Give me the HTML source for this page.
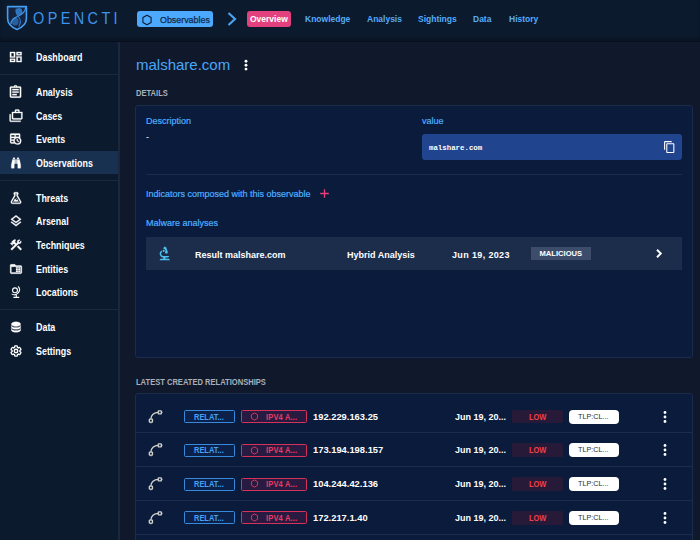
<!DOCTYPE html>
<html lang="en">
<head>
<meta charset="utf-8">
<title>OpenCTI - malshare.com</title>
<style>
*{box-sizing:border-box;margin:0;padding:0}
html,body{width:700px;height:540px;overflow:hidden;background:#0f192b;font-family:"Liberation Sans",sans-serif;color:#fff}
.abs{position:absolute}
.t{position:absolute;white-space:nowrap;line-height:1;transform:translateY(-50%)}
#top{position:absolute;left:0;top:0;width:700px;height:42px;background:#0c1a2e;border-bottom:1.300px solid #070f1c;box-shadow:inset 0 -3px 3px rgba(0,0,0,.22);z-index:2}
#side{position:absolute;left:0;top:41.500px;width:120.300px;height:499px;background:#0c1a2e;border-right:2.300px solid #1b273c}
.nav{position:absolute;left:36px;margin-top:.4px;font-size:10px;font-weight:700;color:#fff;line-height:1;transform:translateY(-50%) scaleX(.89);transform-origin:0 50%;white-space:nowrap}
.ico{position:absolute;left:8.700px;width:14px;height:14px;margin-top:-.8px;transform:translateY(-50%);stroke:#fff;stroke-width:.5px}
.sdiv{position:absolute;left:0;width:118px;height:1px;background:#1b2940}
.tab{position:absolute;top:18.500px;font-size:8.5px;font-weight:700;color:#57abf7;line-height:1;transform:translateY(-50%);white-space:nowrap}
.chip{position:absolute;border-radius:3px;line-height:1;white-space:nowrap}
.lbl{position:absolute;font-size:9px;color:#4dafff;-webkit-text-stroke:.2px #4dafff;line-height:1;transform:translateY(-50%);white-space:nowrap}
.h{position:absolute;left:136px;font-size:8.600px;font-weight:700;color:#aab0b8;line-height:1;transform:translateY(-50%) scaleX(.88);transform-origin:0 50%;white-space:nowrap}
.paper{position:absolute;left:135px;width:558px;background:#0a1b3b;border:1px solid #1b2c4c;border-radius:3px}
.row{position:absolute;left:0;width:556px;height:33.800px;border-bottom:1px solid #1b2c4c}
.row .t{top:17px}
.oc{position:absolute;top:10.500px;height:13px;border-radius:1.500px}
.ct{position:absolute;top:17px;font-size:8.300px;font-weight:700;line-height:1;white-space:nowrap;transform:translateY(-50%) scaleX(.9);transform-origin:0 50%}
</style>
</head>
<body>
<div id="top">
  <svg class="abs" style="left:6px;top:5px" width="22" height="26" viewBox="0 0 22 26">
    <path d="M1.600 1.600 H20.400 V13.500 C20.400 19 16 22.500 11 24.400 C6 22.500 1.600 19 1.600 13.500 Z" fill="#15233f" stroke="#449ff4" stroke-width="1.600" stroke-linejoin="round"/>
    <ellipse cx="13" cy="6.600" rx="3.300" ry="3.500" fill="#2f75bd"/>
    <ellipse cx="9.200" cy="16.600" rx="3.400" ry="4" fill="#27609f"/>
    <path d="M19.800 1.800 C19.500 7 16.500 9.500 11.500 11.500 C7 13.300 4.800 15.500 5 19" fill="none" stroke="#4499ea" stroke-width="1.200"/>
    <path d="M10.300 3.600 C9.500 7.500 11 10 13 12.500 C15 15 14.500 18.500 12.700 21.500" fill="none" stroke="#2f78c8" stroke-width="1.200"/>
  </svg>
  <div class="t" style="left:33px;top:17.500px;font-size:17px;letter-spacing:4px;color:#3d94ea;font-weight:400;transform:translateY(-50%) scaleX(.85);transform-origin:0 50%">OPENCTI</div>
  <div class="chip" style="left:137px;top:11px;width:76px;height:16px;background:#4da9ff"></div>
  <svg class="abs" style="left:141px;top:13.500px" width="12" height="12" viewBox="0 0 24 24"><path d="M12 2.5 L20.2 7.2 V16.8 L12 21.5 L3.800 16.8 V7.2 Z" fill="none" stroke="#0c1a2e" stroke-width="2.2" stroke-linejoin="round"/></svg>
  <div class="t" style="left:160px;top:19.600px;font-size:8.900px;font-weight:400;color:#10294a;-webkit-text-stroke:.25px #10294a">Observables</div>
  <svg class="abs" style="left:225px;top:11.300px" width="14" height="16" viewBox="0 0 14 16"><path d="M3.500 2 L10 8 L3.500 14" fill="none" stroke="#4aa3f0" stroke-width="2.2"/></svg>
  <div class="chip" style="left:246.500px;top:11px;width:44px;height:16px;background:#e3417d"></div>
  <div class="t" style="left:250px;top:19px;font-size:8.5px;font-weight:700;color:#fff">Overview</div>
  <div class="tab" style="left:305px">Knowledge</div>
  <div class="tab" style="left:367px">Analysis</div>
  <div class="tab" style="left:418px">Sightings</div>
  <div class="tab" style="left:473px">Data</div>
  <div class="tab" style="left:509px">History</div>
</div>
<div id="side">
  <div class="abs" style="left:0;top:109.400px;width:118px;height:23.400px;background:#193150"></div>
  <svg class="ico" style="top:16px;left:7.800px;width:15.600px;height:13.600px" preserveAspectRatio="none" viewBox="0 0 24 24" fill="#fff"><path d="M19 5v2h-4V5h4M9 5v6H5V5h4m10 8v6h-4v-6h4M9 17v2H5v-2h4M21 3h-8v6h8V3M11 3H3v10h8V3m10 8h-8v10h8V11m-10 4H3v6h8v-6z"/></svg>
  <svg class="ico" style="top:51px;left:8.200px;width:15px;height:15px" viewBox="0 0 24 24" fill="#fff"><path d="M7 15h7v2H7zm0-4h10v2H7zm0-4h10v2H7zm12-4h-4.180C14.400 1.840 13.300 1 12 1c-1.300 0-2.400.840-2.820 2H5c-.140 0-.270.010-.4.040-.390.080-.740.280-1.010.550-.180.180-.330.400-.430.640-.1.230-.160.490-.160.770v14c0 .270.060.540.160.780s.250.450.430.640c.270.270.620.470 1.010.550.130.020.260.030.4.030h14c1.100 0 2-.9 2-2V5c0-1.100-.9-2-2-2zm-7-.250c.410 0 .750.340.750.750s-.340.750-.750.750-.750-.340-.750-.750.340-.750.750-.750zM19 19H5V5h14v14z"/></svg>
  <svg class="ico" style="top:75px" viewBox="0 0 24 24" fill="#fff"><path d="M3 9H1v11c0 1.110.890 2 2 2h17v-2H3V9z"/><path d="M18 5V3c0-1.100-.9-2-2-2h-4c-1.100 0-2 .9-2 2v2H5v11c0 1.110.890 2 2 2h14c1.110 0 2-.890 2-2V5h-5zm-6-2h4v2h-4V3zm9 13H7V7h14v9z"/></svg>
  <svg class="ico" style="top:98px;left:8.900px;width:13.400px;height:13.400px" viewBox="0 0 24 24" fill="#fff"><path d="M14 12h1.500v2.820l2.440 1.410-.750 1.300L14 15.690V12M4 2h14a2 2 0 0 1 2 2v6.100c1.240 1.260 2 2.990 2 4.900a7 7 0 0 1-7 7c-1.910 0-3.640-.760-4.900-2H4a2 2 0 0 1-2-2V4a2 2 0 0 1 2-2m0 13v3h4.670c-.430-.910-.670-1.930-.670-3H4m0-7h6V5H4v3m14 0V5h-6v3h6M4 13h4.290c.340-1.150.970-2.180 1.810-3H4v3m11-2.850A4.850 4.850 0 0 0 10.150 15c0 2.680 2.170 4.850 4.850 4.850A4.850 4.850 0 0 0 19.850 15c0-2.680-2.170-4.850-4.850-4.850z"/></svg>
  <svg class="ico" style="top:122px" viewBox="0 0 24 24" fill="#fff"><path d="M11 6H13V13H11V6M9 20A1 1 0 0 1 8 21H5A1 1 0 0 1 4 20V15L6 6H10V13A1 1 0 0 1 9 14V20M10 5H7V3H10V5M15 20V14A1 1 0 0 1 14 13V6H18L20 15V20A1 1 0 0 1 19 21H16A1 1 0 0 1 15 20M14 5V3H17V5H14Z"/></svg>
  <svg class="ico" style="top:157px" viewBox="0 0 24 24" fill="#fff"><path d="M5 19a1 1 0 0 0 1 1h12a1 1 0 0 0 1-1c0-.210-.070-.410-.180-.570L13 8.350V4h-2v4.350L5.180 18.430c-.110.160-.180.360-.180.570m1 3a3 3 0 0 1-3-3c0-.6.180-1.160.5-1.630L9 7.810V6a1 1 0 0 1-1-1V4a2 2 0 0 1 2-2h4a2 2 0 0 1 2 2v1a1 1 0 0 1-1 1v1.810l5.500 9.560c.320.470.5 1.030.5 1.630a3 3 0 0 1-3 3H6m7-6l1.340-1.340L16.270 18H7.730l2.660-4.610L13 16m-.5-4a.5.500 0 0 1 .5.500.5.500 0 0 1-.5.500.5.500 0 0 1-.5-.5.5.500 0 0 1 .5-.5z"/></svg>
  <svg class="ico" style="top:180.5px" viewBox="0 0 24 24" fill="#fff"><path d="M11.990 18.540l-7.370-5.730L3 14.070l9 7 9-7-1.630-1.270-7.380 5.740zM12 16l7.360-5.730L21 9l-9-7-9 7 1.630 1.270L12 16zm0-11.470L17.740 9 12 13.470 6.260 9 12 4.530z"/></svg>
  <svg class="ico" style="top:204px" viewBox="0 0 24 24" fill="#fff"><path d="m13.783 15.172 2.121-2.121 5.996 5.996-2.121 2.121zM17.500 10c1.930 0 3.500-1.570 3.500-3.500 0-.580-.160-1.120-.410-1.600l-2.700 2.700-1.490-1.490 2.700-2.700c-.480-.250-1.020-.410-1.600-.410C15.570 3 14 4.570 14 6.500c0 .410.080.8.210 1.160l-1.850 1.850-1.780-1.780.710-.710-1.410-1.410L12 3.490c-1.170-1.170-3.070-1.170-4.240 0L4.220 7.030l1.410 1.410H2.810l-.710.710 3.540 3.540.710-.710V9.150l1.410 1.410.710-.710 1.780 1.780-7.410 7.410 2.120 2.120L16.340 9.790c.360.130.750.210 1.160.210z"/></svg>
  <svg class="ico" style="top:228px" viewBox="0 0 24 24" fill="#fff"><path d="M4 4c-1.110 0-2 .890-2 2v12c0 1.100.9 2 2 2h16c1.100 0 2-.9 2-2V8c0-1.110-.9-2-2-2h-8l-2-2H4m0 4h16v10H4V8m8 1v2h3V9h-3m4 0v2h3V9h-3m-4 3v2h3v-2h-3m4 0v2h3v-2h-3m-4 3v2h3v-2h-3m4 0v2h3v-2h-3z"/></svg>
  <svg class="ico" style="top:251px" viewBox="0 0 24 24" fill="#fff"><circle cx="10.300" cy="9.200" r="4.200" fill="none" stroke="#fff" stroke-width="1.900"/><path d="M15.600 2.400 A8.500 8.500 0 0 1 4.600 15.200" fill="none" stroke="#fff" stroke-width="1.900"/><path d="M12.500 17v3.500M7.500 21.200h10" fill="none" stroke="#fff" stroke-width="1.900"/></svg>
  <svg class="ico" style="top:286.5px" viewBox="0 0 24 24" fill="#fff"><path d="M12 3C7.580 3 4 4.790 4 7s3.580 4 8 4 8-1.790 8-4-3.580-4-8-4M4 9v3c0 2.210 3.580 4 8 4s8-1.790 8-4V9c0 2.210-3.580 4-8 4s-8-1.790-8-4m0 5v3c0 2.210 3.580 4 8 4s8-1.790 8-4v-3c0 2.210-3.580 4-8 4s-8-1.790-8-4z"/></svg>
  <svg class="ico" style="top:310px" viewBox="0 0 24 24" fill="#fff"><g fill="none" stroke="#fff" stroke-width="2.500"><path transform="translate(12 12) scale(.88) translate(-12 -12)" d="M19.430 12.970C19.470 12.650 19.500 12.330 19.500 12C19.500 11.670 19.470 11.340 19.430 11L21.540 9.370C21.730 9.220 21.780 8.950 21.660 8.730L19.660 5.270C19.540 5.050 19.270 4.960 19.050 5.050L16.560 6.050C16.040 5.660 15.500 5.320 14.870 5.070L14.500 2.420C14.460 2.180 14.250 2 14 2H10C9.750 2 9.540 2.180 9.500 2.420L9.130 5.070C8.500 5.320 7.960 5.660 7.440 6.050L4.950 5.050C4.730 4.960 4.460 5.050 4.340 5.270L2.340 8.730C2.210 8.950 2.270 9.220 2.460 9.370L4.570 11C4.530 11.340 4.500 11.670 4.500 12C4.500 12.330 4.530 12.650 4.570 12.970L2.460 14.630C2.270 14.780 2.210 15.050 2.340 15.270L4.340 18.730C4.460 18.950 4.730 19.030 4.950 18.950L7.440 17.940C7.960 18.340 8.500 18.680 9.130 18.930L9.500 21.580C9.540 21.820 9.750 22 10 22H14C14.250 22 14.460 21.820 14.500 21.580L14.870 18.930C15.500 18.670 16.040 18.340 16.560 17.940L19.050 18.950C19.270 19.030 19.540 18.950 19.660 18.730L21.660 15.270C21.780 15.050 21.730 14.780 21.540 14.630L19.430 12.970Z"/><circle cx="12" cy="12" r="3"/></g></svg>
  <div class="nav" style="top:16px">Dashboard</div>
  <div class="sdiv" style="top:32.300px"></div>
  <div class="nav" style="top:51px">Analysis</div>
  <div class="nav" style="top:75px">Cases</div>
  <div class="nav" style="top:98px">Events</div>
  <div class="nav" style="top:122px">Observations</div>
  <div class="sdiv" style="top:138.300px"></div>
  <div class="nav" style="top:157px">Threats</div>
  <div class="nav" style="top:180.500px">Arsenal</div>
  <div class="nav" style="top:204px">Techniques</div>
  <div class="nav" style="top:228px">Entities</div>
  <div class="nav" style="top:251px">Locations</div>
  <div class="sdiv" style="top:267.400px"></div>
  <div class="nav" style="top:286.500px">Data</div>
  <div class="nav" style="top:310px">Settings</div>
</div>
<div id="main">
  <div class="t" style="left:136px;top:64px;font-size:15px;color:#4aa6fa">malshare.com</div>
  <svg class="abs" style="left:243px;top:58px" width="6" height="14" viewBox="0 0 6 14"><circle cx="3" cy="3.300" r="1.450" fill="#fff"/><circle cx="3" cy="7.200" r="1.450" fill="#fff"/><circle cx="3" cy="11.100" r="1.450" fill="#fff"/></svg>
  <div class="h" style="top:93.200px">DETAILS</div>
  <div class="paper" style="top:105px;height:252.500px"></div>
  <div class="lbl" style="left:146px;top:121px">Description</div>
  <div class="t" style="left:146px;top:136.500px;font-size:9px;color:#fff">-</div>
  <div class="lbl" style="left:422px;top:121px">value</div>
  <div class="abs" style="left:422px;top:134px;width:260px;height:26px;background:#21448f;border-radius:3px"></div>
  <div class="t" style="left:429px;top:148.900px;font-size:7.400px;font-weight:700;font-family:'Liberation Mono',monospace;color:#fff">malshare.com</div>
  <div class="abs" style="left:146px;top:174px;width:536px;height:1px;background:#1b2c4c"></div>
  <div class="lbl" style="left:146px;top:193.500px">Indicators composed with this observable</div>
  <div class="lbl" style="left:146px;top:222.500px">Malware analyses</div>
  <div class="abs" style="left:146px;top:236.500px;width:536px;height:33.500px;background:#1c2c4b"></div>
  <div class="t" style="left:195px;top:254.700px;font-size:9px;font-weight:700">Result malshare.com</div>
  <div class="t" style="left:347px;top:254.700px;font-size:9px;font-weight:700">Hybrid Analysis</div>
  <div class="t" style="left:452px;top:254.700px;font-size:9px;font-weight:700;letter-spacing:.36px">Jun 19, 2023</div>
  <div class="abs" style="left:531px;top:247px;width:60px;height:13px;background:#3d4c6a"></div>
  <div class="t" style="left:539.500px;top:254px;font-size:7.600px;font-weight:700">MALICIOUS</div>
  <svg class="abs" style="left:662.700px;top:139.800px" width="13" height="14" viewBox="0 0 24 24" fill="#fff"><path d="M16 1H4c-1.100 0-2 .9-2 2v14h2V3h12V1zm3 4H8c-1.100 0-2 .9-2 2v14c0 1.100.9 2 2 2h11c1.100 0 2-.9 2-2V7c0-1.100-.9-2-2-2zm0 16H8V7h11v14z"/></svg>
  <svg class="abs" style="left:319px;top:188px" width="11" height="11" viewBox="0 0 11 11"><path d="M5.500 1.200V9.800M1.200 5.500H9.800" stroke="#e8407c" stroke-width="1.300" fill="none"/></svg>
  <svg class="abs" style="left:156.300px;top:244.900px" width="17.500" height="17.500" viewBox="0 0 24 24" fill="#4dc0ee"><path d="M7 19c-1.100 0-2 .9-2 2h14c0-1.100-.9-2-2-2h-4v-2h3c1.100 0 2-.9 2-2h-8c-1.660 0-3-1.340-3-3 0-1.090.590-2.040 1.460-2.560C8.170 9.030 8 8.540 8 8c0-.210.040-.420.090-.620C6.280 8.130 5 9.920 5 12c0 2.760 2.240 5 5 5v2H7z"/><path d="M10.560 5.510C11.910 5.540 13 6.640 13 8c0 .750-.330 1.410-.850 1.870l.590 1.620.940-.340.340.940 1.880-.680-.340-.940.940-.340-2.740-7.520-.940.340-.340-.940-1.880.680.340.940-.940.340.560 1.540z"/><circle cx="10.500" cy="8" r="1.500"/></svg>
  <svg class="abs" style="left:654px;top:247px" width="10" height="13" viewBox="0 0 10 13"><path d="M3 2.800 L6.800 6.500 L3 10.200" fill="none" stroke="#fff" stroke-width="1.900"/></svg>
  <div class="h" style="top:382px">LATEST CREATED RELATIONSHIPS</div>
  <div class="paper" style="top:393px;height:160px;overflow:hidden">
<!--ROWS-->
    <div class="row" style="top:5.5px">
      <svg class="abs" style="left:10.5px;top:8px" width="17" height="17" viewBox="0 0 24 24" fill="none" stroke="#cfd0cc" stroke-width="1.900"><path d="M5.500 15.500 C5.500 10 10 6.200 15.800 6.200"/><rect x="3.300" y="15.600" width="4.400" height="4.400" rx=".6"/><rect x="15.900" y="4" width="4.400" height="4.400" rx=".6"/><path d="M5.500 20v1.700M20.300 6.200h1.500"/></svg>
      <div class="oc" style="left:48px;width:51px;border:1px solid #3889dc;background:#0b2149"></div>
      <div class="ct" style="left:57.5px;color:#45a0f7">RELAT...</div>
      <div class="oc" style="left:105px;width:65.500px;border:1px solid #d4325a;background:#281a40"></div>
      <svg class="abs" style="left:114.3px;top:12.300px" width="9" height="9" viewBox="0 0 24 24"><path d="M12 2.500 L20.200 7.200 V16.800 L12 21.500 L3.800 16.800 V7.200 Z" fill="none" stroke="#e8395f" stroke-width="2.400" stroke-linejoin="round"/></svg>
      <div class="ct" style="left:129.8px;color:#ea3a60;letter-spacing:.2px">IPV4 A...</div>
      <div class="t" style="left:177.3px;font-size:9.800px;font-weight:700;transform:translateY(-50%) scaleX(.955);transform-origin:0 50%">192.229.163.25</div>
      <div class="t" style="left:318.5px;font-size:9.800px;font-weight:700;transform:translateY(-50%) scaleX(.92);transform-origin:0 50%">Jun 19, 20...</div>
      <div class="oc" style="left:375.5px;width:51px;background:#271a38;top:10.200px;height:13.600px"></div>
      <div class="ct" style="left:392.5px;color:#f23f45">LOW</div>
      <div class="oc" style="left:432.7px;width:50.500px;background:#fff;border-radius:4px;top:10px;height:14px"></div>
      <div class="ct" style="left:441.5px;color:#2b2b2b;font-weight:400;font-size:8px">TLP:CL...</div>
      <svg class="abs" style="left:525.5px;top:10px" width="6" height="14" viewBox="0 0 6 14"><circle cx="3" cy="2.500" r="1.400" fill="#fff"/><circle cx="3" cy="7" r="1.400" fill="#fff"/><circle cx="3" cy="11.500" r="1.400" fill="#fff"/></svg>
    </div>
    <div class="row" style="top:39.3px">
      <svg class="abs" style="left:10.5px;top:8px" width="17" height="17" viewBox="0 0 24 24" fill="none" stroke="#cfd0cc" stroke-width="1.900"><path d="M5.500 15.500 C5.500 10 10 6.200 15.800 6.200"/><rect x="3.300" y="15.600" width="4.400" height="4.400" rx=".6"/><rect x="15.900" y="4" width="4.400" height="4.400" rx=".6"/><path d="M5.500 20v1.700M20.300 6.200h1.500"/></svg>
      <div class="oc" style="left:48px;width:51px;border:1px solid #3889dc;background:#0b2149"></div>
      <div class="ct" style="left:57.5px;color:#45a0f7">RELAT...</div>
      <div class="oc" style="left:105px;width:65.500px;border:1px solid #d4325a;background:#281a40"></div>
      <svg class="abs" style="left:114.3px;top:12.300px" width="9" height="9" viewBox="0 0 24 24"><path d="M12 2.500 L20.200 7.200 V16.800 L12 21.500 L3.800 16.800 V7.200 Z" fill="none" stroke="#e8395f" stroke-width="2.400" stroke-linejoin="round"/></svg>
      <div class="ct" style="left:129.8px;color:#ea3a60;letter-spacing:.2px">IPV4 A...</div>
      <div class="t" style="left:177.3px;font-size:9.800px;font-weight:700;transform:translateY(-50%) scaleX(.955);transform-origin:0 50%">173.194.198.157</div>
      <div class="t" style="left:318.5px;font-size:9.800px;font-weight:700;transform:translateY(-50%) scaleX(.92);transform-origin:0 50%">Jun 19, 20...</div>
      <div class="oc" style="left:375.5px;width:51px;background:#271a38;top:10.200px;height:13.600px"></div>
      <div class="ct" style="left:392.5px;color:#f23f45">LOW</div>
      <div class="oc" style="left:432.7px;width:50.500px;background:#fff;border-radius:4px;top:10px;height:14px"></div>
      <div class="ct" style="left:441.5px;color:#2b2b2b;font-weight:400;font-size:8px">TLP:CL...</div>
      <svg class="abs" style="left:525.5px;top:10px" width="6" height="14" viewBox="0 0 6 14"><circle cx="3" cy="2.500" r="1.400" fill="#fff"/><circle cx="3" cy="7" r="1.400" fill="#fff"/><circle cx="3" cy="11.500" r="1.400" fill="#fff"/></svg>
    </div>
    <div class="row" style="top:73.1px">
      <svg class="abs" style="left:10.5px;top:8px" width="17" height="17" viewBox="0 0 24 24" fill="none" stroke="#cfd0cc" stroke-width="1.900"><path d="M5.500 15.500 C5.500 10 10 6.200 15.800 6.200"/><rect x="3.300" y="15.600" width="4.400" height="4.400" rx=".6"/><rect x="15.900" y="4" width="4.400" height="4.400" rx=".6"/><path d="M5.500 20v1.700M20.300 6.200h1.500"/></svg>
      <div class="oc" style="left:48px;width:51px;border:1px solid #3889dc;background:#0b2149"></div>
      <div class="ct" style="left:57.5px;color:#45a0f7">RELAT...</div>
      <div class="oc" style="left:105px;width:65.500px;border:1px solid #d4325a;background:#281a40"></div>
      <svg class="abs" style="left:114.3px;top:12.300px" width="9" height="9" viewBox="0 0 24 24"><path d="M12 2.500 L20.200 7.200 V16.800 L12 21.500 L3.800 16.800 V7.200 Z" fill="none" stroke="#e8395f" stroke-width="2.400" stroke-linejoin="round"/></svg>
      <div class="ct" style="left:129.8px;color:#ea3a60;letter-spacing:.2px">IPV4 A...</div>
      <div class="t" style="left:177.3px;font-size:9.800px;font-weight:700;transform:translateY(-50%) scaleX(.955);transform-origin:0 50%">104.244.42.136</div>
      <div class="t" style="left:318.5px;font-size:9.800px;font-weight:700;transform:translateY(-50%) scaleX(.92);transform-origin:0 50%">Jun 19, 20...</div>
      <div class="oc" style="left:375.5px;width:51px;background:#271a38;top:10.200px;height:13.600px"></div>
      <div class="ct" style="left:392.5px;color:#f23f45">LOW</div>
      <div class="oc" style="left:432.7px;width:50.500px;background:#fff;border-radius:4px;top:10px;height:14px"></div>
      <div class="ct" style="left:441.5px;color:#2b2b2b;font-weight:400;font-size:8px">TLP:CL...</div>
      <svg class="abs" style="left:525.5px;top:10px" width="6" height="14" viewBox="0 0 6 14"><circle cx="3" cy="2.500" r="1.400" fill="#fff"/><circle cx="3" cy="7" r="1.400" fill="#fff"/><circle cx="3" cy="11.500" r="1.400" fill="#fff"/></svg>
    </div>
    <div class="row" style="top:106.9px">
      <svg class="abs" style="left:10.5px;top:8px" width="17" height="17" viewBox="0 0 24 24" fill="none" stroke="#cfd0cc" stroke-width="1.900"><path d="M5.500 15.500 C5.500 10 10 6.200 15.800 6.200"/><rect x="3.300" y="15.600" width="4.400" height="4.400" rx=".6"/><rect x="15.900" y="4" width="4.400" height="4.400" rx=".6"/><path d="M5.500 20v1.700M20.300 6.200h1.500"/></svg>
      <div class="oc" style="left:48px;width:51px;border:1px solid #3889dc;background:#0b2149"></div>
      <div class="ct" style="left:57.5px;color:#45a0f7">RELAT...</div>
      <div class="oc" style="left:105px;width:65.500px;border:1px solid #d4325a;background:#281a40"></div>
      <svg class="abs" style="left:114.3px;top:12.300px" width="9" height="9" viewBox="0 0 24 24"><path d="M12 2.500 L20.200 7.200 V16.800 L12 21.500 L3.800 16.800 V7.200 Z" fill="none" stroke="#e8395f" stroke-width="2.400" stroke-linejoin="round"/></svg>
      <div class="ct" style="left:129.8px;color:#ea3a60;letter-spacing:.2px">IPV4 A...</div>
      <div class="t" style="left:177.3px;font-size:9.800px;font-weight:700;transform:translateY(-50%) scaleX(.955);transform-origin:0 50%">172.217.1.40</div>
      <div class="t" style="left:318.5px;font-size:9.800px;font-weight:700;transform:translateY(-50%) scaleX(.92);transform-origin:0 50%">Jun 19, 20...</div>
      <div class="oc" style="left:375.5px;width:51px;background:#271a38;top:10.200px;height:13.600px"></div>
      <div class="ct" style="left:392.5px;color:#f23f45">LOW</div>
      <div class="oc" style="left:432.7px;width:50.500px;background:#fff;border-radius:4px;top:10px;height:14px"></div>
      <div class="ct" style="left:441.5px;color:#2b2b2b;font-weight:400;font-size:8px">TLP:CL...</div>
      <svg class="abs" style="left:525.5px;top:10px" width="6" height="14" viewBox="0 0 6 14"><circle cx="3" cy="2.500" r="1.400" fill="#fff"/><circle cx="3" cy="7" r="1.400" fill="#fff"/><circle cx="3" cy="11.500" r="1.400" fill="#fff"/></svg>
    </div>
<!--/ROWS-->
  </div>
</div>
</body>
</html>
